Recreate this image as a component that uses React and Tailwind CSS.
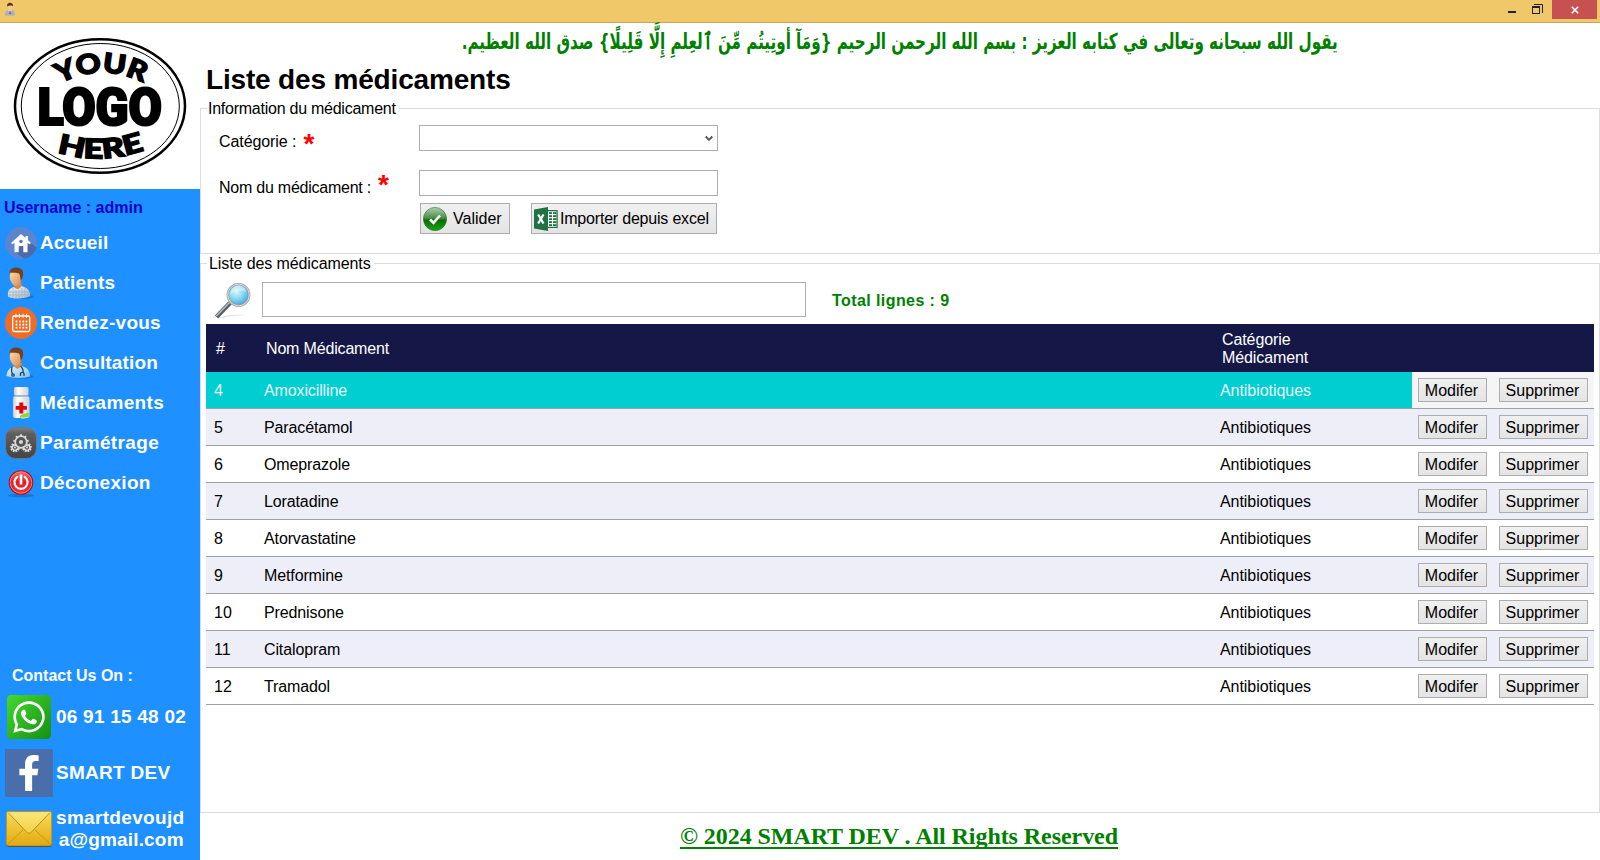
import React from "react";
import { FaWhatsapp, FaFacebookF } from "react-icons/fa";

function PersonIcon({ doctor = false, size = 32 }) {
  const id = doctor ? "doc" : "pat";
  return (
    <svg width={size} height={size} viewBox="0 0 32 32">
      <defs>
        <linearGradient id={id + "f"} x1="0" x2="1" y1="0" y2="1">
          <stop offset="0" stopColor="#ffdcae" />
          <stop offset="1" stopColor="#d98a4e" />
        </linearGradient>
        <linearGradient id={id + "b"} x1="0" x2="1" y1="0" y2="1">
          <stop offset="0" stopColor={doctor ? "#e4f4ff" : "#f4f8fa"} />
          <stop offset="1" stopColor={doctor ? "#7cc0ee" : "#a9bcc8"} />
        </linearGradient>
      </defs>
      <ellipse cx="18" cy="29.500" rx="10.500" ry="2.300" fill="#1565b4" opacity=".55" />
      <path d="M8 16h9l-1 7-5 1z" fill="#d48a50" />
      <path
        d={
          doctor
            ? "M1.500 29C2 24 4 21 9 19.500l3.500 2.500 4-3c6 1.500 8.500 5 8.500 10.500-5 2-17 2-23.500-.5z"
            : "M3 29.500C2.500 24 4 21.500 9 20c2.500 3 5.500 2.500 7.500-1 5.500 1.500 8.500 4.500 8.700 10-5 3-17.200 3.500-22.200.5z"
        }
        fill={"url(#" + id + "b)"}
      />
      {doctor ? (
        <g fill="none" stroke="#27435c" strokeWidth="1.300">
          <path d="M7 20c-1 3-1 4 .5 7M15.500 19c3 3 3 5 2.500 7" />
          <circle cx="8" cy="28" r="1.200" />
          <path d="M15.500 29v-2.500c.5-1.500 3-1.500 3.500 0V29" />
        </g>
      ) : (
        <g stroke="#8fa6b5" strokeWidth=".7" fill="none" opacity=".8">
          <path d="M5 23v7M8 21v10M11 23v8M14 23v8M17 21v10M20 21v9M23 24v6" />
          <path d="M3 25h21M3 28h22" />
        </g>
      )}
      <path d="M5 6c1-3 10-3 11.500 1 .8 4 0 9-3.500 11.500-2 1-4 .5-5.500-1.500C5 14 4.300 10 5 6z" fill={"url(#" + id + "f)"} />
      <path
        d="M4.800 8C3.500 2 8 .3 11.500.6c5 .2 7.500 3.400 6.500 7.900-.3 2.200-1 4-2.200 5.500-.6-2.800-.3-5-1.800-7.500C11.500 5 8 6 5.500 5.500z"
        fill="#7a4119"
      />
    </svg>
  );
}

function HomeIcon() {
  return (
    <svg width="32" height="32" viewBox="0 0 32 32">
      <circle cx="16" cy="16" r="16" fill="#5c85cf" />
      <path d="M22 13 31.500 20.500a16 16 0 0 1-12 11.200L10 25z" fill="#4b6aa9" />
      <path d="M16 7 6 16l1.300 1.300L9.500 16v9.300h4.200v-6.300h4.600v6.300h4.200V16l2.200 1.300L26 16l-3-2.700V9h-2.500v2z" fill="#fff" />
      <circle cx="16" cy="14.500" r="1.800" fill="#5878bd" />
    </svg>
  );
}

function CalendarIcon() {
  return (
    <svg width="32" height="32" viewBox="0 0 32 32">
      <circle cx="16" cy="16" r="16" fill="#ee6c24" />
      <g fill="none" stroke="#fff" strokeWidth="1.300">
        <rect x="7.700" y="9" width="17" height="15.500" rx="1.500" />
        <path d="M11 6.800v4M14.500 6.800v4M18 6.800v4M21.500 6.800v4" strokeWidth="1" />
      </g>
      <g fill="#fff">
        {[10.600, 14, 17.400, 20.600].map((x) =>
          [13.600, 16.700, 19.800].map((y) => <rect key={x + "-" + y} x={x} y={y} width="1.800" height="1.800" />)
        )}
      </g>
    </svg>
  );
}

function PillsIcon() {
  return (
    <svg width="32" height="32" viewBox="0 0 32 32">
      <defs>
        <linearGradient id="pill" x1="0" x2="1">
          <stop offset="0" stopColor="#c9ccd0" />
          <stop offset=".3" stopColor="#fff" />
          <stop offset="1" stopColor="#d0d2d6" />
        </linearGradient>
      </defs>
      <rect x="8" y="9" width="16.500" height="22" rx="2.500" fill="url(#pill)" />
      <rect x="9" y="0" width="14.500" height="8.500" rx="1.500" fill="url(#pill)" />
      <path d="M10 9.300h12.500" stroke="#a8adb4" />
      <path d="M14.300 15.500h4v3.600h3.600v3.700h-3.600v3.600h-4v-3.600h-3.600v-3.700h3.600z" fill="#e2070d" />
      <rect x="15" y="26.700" width="10" height="4" rx="2" fill="#8ed43a" transform="rotate(-18 20 29)" />
      <path d="M16 30c1 1.300 3 1.300 5 .5" stroke="#d9f5a4" fill="none" />
    </svg>
  );
}

const TEETH = [0, 40, 80, 120, 160, 200, 240, 280, 320];

function Gear({ x, y, r }) {
  return (
    <g transform={`translate(${x} ${y})`}>
      <circle r={r} fill="none" stroke="#d9d9d9" strokeWidth="1.700" />
      {TEETH.map((a) => (
        <rect key={a} x="-.9" y={-r - 2} width="1.800" height="2" fill="#d9d9d9" transform={`rotate(${a})`} />
      ))}
      <circle r={r * 0.35} fill="#d9d9d9" />
    </g>
  );
}

function SettingsIcon() {
  return (
    <svg width="32" height="32" viewBox="0 0 32 32">
      <defs>
        <linearGradient id="gbg" x1="0" x2="0" y1="0" y2="1">
          <stop offset="0" stopColor="#828282" />
          <stop offset=".2" stopColor="#5e5e5e" />
          <stop offset="1" stopColor="#444" />
        </linearGradient>
      </defs>
      <rect x=".5" y=".5" width="31" height="31" rx="10" fill="url(#gbg)" stroke="#777" />
      <Gear x={10} y={20.500} r={2.800} />
      <Gear x={22} y={20.500} r={2.800} />
      <circle cx="16" cy="15" r="7" fill="#555" />
      <Gear x={16} y={15} r={5.800} />
    </svg>
  );
}

function PowerIcon() {
  return (
    <svg width="32" height="32" viewBox="0 0 32 32">
      <defs>
        <linearGradient id="pw" x1="0" x2="0" y1="0" y2="1">
          <stop offset="0" stopColor="#f56a6a" />
          <stop offset=".5" stopColor="#e01c20" />
          <stop offset="1" stopColor="#f0393b" />
        </linearGradient>
      </defs>
      <ellipse cx="16" cy="28.500" rx="13" ry="1.800" fill="#1769bd" opacity=".7" />
      <circle cx="16" cy="15.500" r="12.300" fill="#b30d12" />
      <circle cx="16" cy="15.500" r="10.800" fill="url(#pw)" stroke="#fa9a9a" strokeWidth=".8" />
      <path d="M12.300 9.800a6.600 6.600 0 1 0 7.400 0" fill="none" stroke="#fff" strokeWidth="2.200" strokeLinecap="round" />
      <path d="M16 7.500v10" stroke="#fff" strokeWidth="2.600" />
    </svg>
  );
}

function MailIcon() {
  return (
    <svg width="46" height="36" viewBox="0 0 46 36">
      <defs>
        <linearGradient id="ml" x1="0" x2="0" y1="0" y2="1">
          <stop offset="0" stopColor="#f6dd5e" />
          <stop offset="1" stopColor="#e3a90f" />
        </linearGradient>
        <linearGradient id="ml2" x1="0" x2="0" y1="0" y2="1">
          <stop offset="0" stopColor="#fbe777" />
          <stop offset="1" stopColor="#f0cf45" />
        </linearGradient>
      </defs>
      <rect x=".5" y="2" width="45" height="34" rx="2" fill="#4d5a49" />
      <rect x=".5" y=".5" width="45" height="34" rx="2" fill="url(#ml)" stroke="#c8960c" />
      <path d="M1.500 33.500 17 19M44.500 33.500 29 19" stroke="#c28c0a" strokeWidth=".8" />
      <path d="M2 1.500h42L26 20.500c-2 2.300-4 2.300-6 0z" fill="url(#ml2)" stroke="#b98d14" strokeWidth="1" />
      <path d="M1.500 1.500h43" stroke="#fff3a8" strokeWidth=".8" />
    </svg>
  );
}

function CheckIcon() {
  return (
    <svg width="24" height="24" viewBox="0 0 24 24">
      <defs>
        <linearGradient id="ck" x1="0" x2="0" y1="0" y2="1">
          <stop offset="0" stopColor="#b4d0b1" />
          <stop offset=".45" stopColor="#4a8f47" />
          <stop offset=".55" stopColor="#0f6a0c" />
          <stop offset="1" stopColor="#12a80c" />
        </linearGradient>
      </defs>
      <circle cx="12" cy="12" r="11.600" fill="url(#ck)" stroke="#2c6f2a" strokeWidth=".6" />
      <path d="m7 12.500 3.500 3.300L17 8.500" fill="none" stroke="#fff" strokeWidth="2.600" />
    </svg>
  );
}

function ExcelIcon() {
  return (
    <svg width="24" height="24" viewBox="0 0 24 24">
      <path d="M14 3h9.700v18H14z" fill="#1f7244" />
      <path d="M14 4.300h8.500v15.500H14z" fill="#fff" />
      <g fill="#1f7244">
        {[5.200, 8.200, 11.200, 14.200, 17.200].map((y) => (
          <g key={y}>
            <rect x="15" y={y} width="3" height="1.900" />
            <rect x="19" y={y} width="3.500" height="1.900" />
          </g>
        ))}
        <path d="M0 2.500 14 0v24L0 21.500z" />
      </g>
      <path d="m4.200 7.500 5.300 9M9.500 7.500l-5.300 9" stroke="#fff" strokeWidth="2.200" />
    </svg>
  );
}

function MagnifierIcon() {
  return (
    <svg width="36" height="36" viewBox="0 0 36 36">
      <defs>
        <radialGradient id="lens" cx=".4" cy=".35" r=".75">
          <stop offset="0" stopColor="#d8f8f8" />
          <stop offset=".5" stopColor="#7fd4ec" />
          <stop offset="1" stopColor="#2f8fe0" />
        </radialGradient>
      </defs>
      <path d="M4 35c5-3 16-4 27-3-8 .5-18 1-22 3z" fill="#e2e2e2" />
      <path d="M15 20 1.500 34" stroke="#5b6064" strokeWidth="4.600" />
      <path d="M14.500 19.500 1.300 33" stroke="#b5babd" strokeWidth="1.500" />
      <circle cx="23.500" cy="12" r="10.700" fill="url(#lens)" stroke="#9aa2a6" strokeWidth="2.400" />
      <circle cx="23.500" cy="12" r="10.800" fill="none" stroke="#dadedf" strokeWidth="1" />
      <path d="M15.500 12c3-5 9-5 16-3-1-5-5-7-9-6.500-4 .5-7 4-7 9.500z" fill="#fff" opacity=".4" />
    </svg>
  );
}

function Logo() {
  return (
    <svg width="200" height="166" viewBox="0 23 200 166">
      <ellipse cx="100" cy="106" rx="85" ry="66.700" fill="#fff" stroke="#000" strokeWidth="2.500" />
      <ellipse cx="100.300" cy="106" rx="79" ry="62.500" fill="none" stroke="#000" strokeWidth="1" />
      <path id="arcTop" d="M60 84Q101 61 146 84" fill="none" />
      <path id="arcBottom" d="M57 152Q101 166 148 149" fill="none" />
      <text fontFamily="Lato, sans-serif" fontWeight="900" fontSize="27" stroke="#000" strokeWidth="1.500">
        <textPath href="#arcTop" textLength="87" lengthAdjust="spacingAndGlyphs">YOUR</textPath>
      </text>
      <text
        x="37.500" y="125" fontFamily="Roboto, sans-serif" fontWeight="900" fontSize="52"
        stroke="#000" strokeWidth="2.200" textLength="124.500" lengthAdjust="spacingAndGlyphs"
      >
        LOGO
      </text>
      <text fontFamily="Lato, sans-serif" fontWeight="900" fontSize="27" stroke="#000" strokeWidth="1.500">
        <textPath href="#arcBottom" textLength="89" lengthAdjust="spacingAndGlyphs">HERE</textPath>
      </text>
    </svg>
  );
}

const MENU = [
  ["Accueil", <HomeIcon />, "tracking-[0.1px]"],
  ["Patients", <PersonIcon />, "tracking-[0.15px]"],
  ["Rendez-vous", <CalendarIcon />, "tracking-[0.24px]"],
  ["Consultation", <PersonIcon doctor />, "tracking-[0.16px]"],
  ["Médicaments", <PillsIcon />, "tracking-[0.34px]"],
  ["Paramétrage", <SettingsIcon />, "tracking-[0.36px]"],
  ["Déconexion", <PowerIcon />, "tracking-[0.3px]"],
];

const ROWS = [
  [4, "Amoxicilline"],
  [5, "Paracétamol"],
  [6, "Omeprazole"],
  [7, "Loratadine"],
  [8, "Atorvastatine"],
  [9, "Metformine"],
  [10, "Prednisone"],
  [11, "Citalopram"],
  [12, "Tramadol"],
];

const BTN = "border border-[#adadad] bg-gradient-to-b from-[#f0f0f0] to-[#e4e4e4] whitespace-nowrap";

function TitleBar() {
  return (
    <header className="flex h-[23px] shrink-0 justify-between border-b border-[#c9a75a] bg-[#f0c869]">
      <div className="pl-[4px] pt-[2px]">
        <svg width="12" height="14" viewBox="0 0 12 14">
          <path d="M1 13.500c0-4 1-5 4-5.500h2c3 .5 4 1.500 4 5.500z" fill="#9fb4c4" />
          <path d="m4.500 8 1.500 4 1.500-4z" fill="#fff" />
          <path d="M5.600 8.500h.9l.3 3-.8 1-.7-1z" fill="#c22" />
          <circle cx="6" cy="4.700" r="2.700" fill="#f2c9a0" />
          <path d="M3.200 4.500C2.800 1.500 4.500.8 6 .8s3.300.7 2.900 3.700C8 3 5 3.500 3.200 4.500z" fill="#5a3516" />
        </svg>
      </div>
      <div className="flex pr-[3px]">
        <svg width="44" height="19" viewBox="0 0 44 19">
          <rect x="0" y="11" width="8" height="2" fill="#222" />
          <g fill="none" stroke="#222">
            <path d="M26 4.500h8.500V13" />
            <rect x="24.500" y="6.500" width="7" height="7" />
            <path d="M24 7h8" strokeWidth="2" />
          </g>
        </svg>
        <div className="flex h-[19px] w-[45px] items-center justify-center bg-[#c75050]">
          <svg width="8" height="8" viewBox="0 0 8 8">
            <path d="m.8.8 6.400 6.400M7.200.8.8 7.200" stroke="#fff" strokeWidth="1.600" />
          </svg>
        </div>
      </div>
    </header>
  );
}

function Sidebar() {
  return (
    <aside className="flex w-[200px] shrink-0 flex-col bg-[#1e90ff] font-bold text-white">
      <div className="h-[166px] bg-white"><Logo /></div>
      <div className="h-[38px] pl-[4px] pt-[10px] text-[16px] leading-[18px] text-[#0000cd]">Username : admin</div>
      <nav>
        {MENU.map(([label, icon, cls]) => (
          <div key={label} className="flex h-[40px] items-start pl-[5px]">
            <span className="w-[35px]">{icon}</span>
            <span className={"pt-[5px] text-[19px] leading-[22px] " + cls}>{label}</span>
          </div>
        ))}
      </nav>
      <div className="mt-[160px] h-[28px] pl-[12px] text-[16px] leading-[18px]">Contact Us On :</div>
      <div className="flex h-[54px] pl-[7px]">
        <span className="flex size-[44px] items-center justify-center rounded-[4px] bg-gradient-to-br from-[#45d92f] to-[#119010]">
          <FaWhatsapp size={36} />
        </span>
        <span className="pl-[5px] pt-[11px] text-[19px] leading-[22px] tracking-[0.23px]">06 91 15 48 02</span>
      </div>
      <div className="flex h-[62px] pl-[5px]">
        <span className="flex size-[48px] items-end justify-center bg-[#4a6ea9] pb-[6px]">
          <FaFacebookF size={36} />
        </span>
        <span className="pl-[3px] pt-[13px] text-[19px] leading-[22px] tracking-[0.27px]">SMART DEV</span>
      </div>
      <div className="flex pl-[6px]">
        <MailIcon />
        <span className="-mt-[4px] pl-[4px] text-center text-[19px] leading-[22px] tracking-[0.32px]">
          smartdevoujd<br /><span className="pl-[2px] tracking-[0.18px]">a@gmail.com</span>
        </span>
      </div>
    </aside>
  );
}

function MedicineTable() {
  const grid = "grid grid-cols-[50px_956px_200px_81px_101px]";
  return (
    <div className="mx-[5px] mt-[7px] text-[16px] leading-[18px]">
      <div className={grid + " h-[48px] items-center bg-[#151847] pt-[2px] text-white"}>
        <span className="pl-[10px]">#</span>
        <span className="pl-[10px] tracking-[-0.17px]">Nom Médicament</span>
        <span className="pl-[10px] tracking-[-0.1px]">Catégorie<br />Médicament</span>
      </div>
      {ROWS.map(([id, name], i) => {
        const cell = i === 0 ? "bg-[#00ced1] text-[#e8f8f8]" : "";
        const row = i === 0 ? "bg-[#f5f5f5]" : i % 2 ? "bg-[#eeeef9]" : "bg-white";
        return (
          <div key={id} className={grid + " h-[37px] border-b border-[#a0a0a0] " + row}>
            <span className={"pl-[8px] pt-[10px] " + cell}>{id}</span>
            <span className={"pl-[8px] pt-[10px] tracking-[-0.12px] " + cell}>{name}</span>
            <span className={"pl-[8px] pt-[10px] tracking-[-0.05px] " + cell}>Antibiotiques</span>
            <button className={BTN + " ml-[6px] mt-[6px] h-[24px] w-[69px] pr-[2px] pt-[1px] leading-[21px]"}>Modifer</button>
            <button className={BTN + " ml-[6px] mt-[6px] h-[24px] w-[89px] pr-[2px] pt-[1px] leading-[21px]"}>Supprimer</button>
          </div>
        );
      })}
    </div>
  );
}

export default function App() {
  return (
    <div className="flex h-[860px] w-[1600px] flex-col overflow-hidden bg-white font-['Liberation_Sans',Arial,sans-serif] text-[16px] text-black">
      <TitleBar />
      <div className="flex min-h-0 flex-1">
        <Sidebar />
        <main className="flex min-w-0 flex-1 flex-col">
          <div className="flex h-[40px] justify-end pr-[262px]">
            <p dir="rtl" className="origin-right scale-x-[0.766] whitespace-nowrap font-['DejaVu_Sans_Condensed','DejaVu_Sans',sans-serif] text-[22px] font-bold leading-[38px] text-[#008000]">
              يقول الله سبحانه وتعالى في كتابه العزيز : بسم الله الرحمن الرحيم {"{"}وَمَآ أوتِيتُم مِّنَ ٱلعِلمِ إِلَّا قَلِيلًا{"}"} صدق الله العظيم.
            </p>
          </div>
          <h1 className="h-[36px] pl-[6px] pt-[1px] text-[28px] font-bold leading-[32px] tracking-[-0.17px]">Liste des médicaments</h1>

          <fieldset className="h-[155px] border border-[#dcdcdc]">
            <legend className="ml-[6px] pl-[1px] pr-[3px] leading-[19px] tracking-[-0.25px]">Information du médicament</legend>
            <div className="pl-[18px] pt-[7px]">
              <div className="flex h-[45px]">
                <label className="flex w-[200px] items-start leading-[18px]">
                  <span className="mt-[8px] tracking-[-0.08px]">Catégorie :</span>
                  <span className="ml-[7px] mt-[5px] text-[28px] font-bold leading-[28px] text-[#f00]">*</span>
                </label>
                <div className="flex h-[26px] w-[299px] items-center justify-end border border-[#abadb3] pr-[4px]">
                  <svg width="8" height="6" viewBox="0 0 8 6"><path d="m.7 1.500 3.300 3.300 3.300-3.300" fill="none" stroke="#555" strokeWidth="1.900" /></svg>
                </div>
              </div>
              <div className="flex h-[33px]">
                <label className="flex w-[200px] items-start leading-[18px]">
                  <span className="mt-[9px] tracking-[-0.24px]">Nom du médicament :</span>
                  <span className="ml-[7px] mt-[1px] text-[28px] font-bold leading-[28px] text-[#f00]">*</span>
                </label>
                <div className="h-[26px] w-[299px] border border-[#abadb3]" />
              </div>
              <div className="flex gap-[21px] pl-[201px]">
                <button className={BTN + " flex h-[31px] w-[90px] items-center gap-[6px] pl-[2px]"}><CheckIcon />Valider</button>
                <button className={BTN + " flex h-[31px] w-[186px] items-center gap-[2px] pl-[2px] tracking-[-0.2px]"}><ExcelIcon />Importer depuis excel</button>
              </div>
            </div>
          </fieldset>

          <fieldset className="h-[559px] border border-[#dcdcdc]">
            <legend className="ml-[6px] pl-[2px] pr-[3px] leading-[19px] tracking-[-0.1px]">Liste des médicaments</legend>
            <div className="flex h-[44px] pt-[9px]">
              <div className="w-[61px] pl-[14px] pt-[1px]"><MagnifierIcon /></div>
              <div className="h-[35px] w-[544px] border border-[#abadb3]" />
              <div className="pl-[26px] pt-[10px] font-bold leading-[18px] tracking-[0.42px] text-[#008000]">Total lignes : 9</div>
            </div>
            <MedicineTable />
          </fieldset>

          <footer className="flex justify-center pr-[2px] pt-[9px] font-['Liberation_Serif','Times_New_Roman',serif] text-[24px] font-bold leading-[27px] text-[#008000]">
            <span className="h-[27px] border-b-2 border-[#008000] leading-[28px] tracking-[-0.06px]">© 2024 SMART DEV . All Rights Reserved</span>
          </footer>
        </main>
      </div>
    </div>
  );
}
